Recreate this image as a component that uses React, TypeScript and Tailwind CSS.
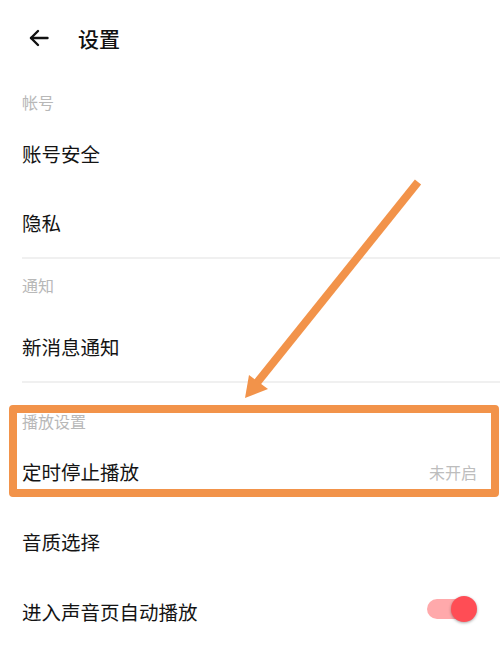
import React from 'react';

const font = { fontFamily: '"Noto Sans CJK SC", "Noto Sans", sans-serif' };

function SectionTitle({ label, pad }: { label: string; pad: string }) {
  return (
    <div className={`h-[54px] px-[22px] ${pad}`}>
      <span className="block text-[16px] leading-[22px] text-[#b8b8b8]">{label}</span>
    </div>
  );
}

function Row({
  label,
  height = 'h-[70px]',
  children,
}: {
  label: string;
  height?: string;
  children?: React.ReactNode;
}) {
  return (
    <div className={`${height} flex items-center justify-between pl-[22px] pr-[23px]`}>
      <span className="text-[19.5px] leading-[26px] text-[#141414]">{label}</span>
      {children}
    </div>
  );
}

function Divider() {
  return <div className="ml-[22px] h-[2px] bg-[#f0f0f0]" />;
}

export default function App() {
  return (
    <div className="relative h-[668px] w-full overflow-hidden bg-white" style={font}>
      <header className="flex h-[76px] items-center pl-[29px]">
        <svg width="20" height="18" viewBox="0 0 20 18" fill="none" stroke="#111" strokeWidth="2.4" strokeLinecap="round" strokeLinejoin="round">
          <path d="M18.5 9H2" />
          <path d="M9 2L2 9l7 7" />
        </svg>
        <h1 className="ml-[29px] text-[21px] font-medium leading-[28px] text-[#111]">设置</h1>
      </header>

      <div className="h-[43px] px-[22px] pt-[15px]">
        <span className="block text-[16px] leading-[22px] text-[#b8b8b8]">帐号</span>
      </div>
      <Row label="账号安全" />
      <Row label="隐私" height="h-[68px]" />
      <Divider />

      <SectionTitle label="通知" pad="pt-[15px]" />
      <Row label="新消息通知" height="h-[68px]" />
      <Divider />

      <SectionTitle label="播放设置" pad="pt-[27px]" />
      <Row label="定时停止播放">
        <span className="text-[16px] leading-[22px] text-[#bdbdbd]">未开启</span>
      </Row>
      <Row label="音质选择" />
      <Row label="进入声音页自动播放">
        <div className="relative mb-[6px] h-[26px] w-[50px]">
          <div className="absolute left-0 top-[3px] h-[20px] w-[44px] rounded-full bg-[#ffa9ab]" />
          <div className="absolute right-0 top-0 h-[26px] w-[26px] rounded-full bg-[#ff4d55] shadow-[0_1px_3px_rgba(0,0,0,0.35)]" />
        </div>
      </Row>

      {/* annotation overlay */}
      <div className="pointer-events-none absolute left-[9px] top-[405px] h-[92px] w-[490px] rounded-[4px] border-[8px] border-[#f2934a]" />
      <svg className="pointer-events-none absolute inset-0" width="500" height="668" viewBox="0 0 500 668">
        <line x1="418" y1="182" x2="256" y2="384" stroke="#f2934a" strokeWidth="8" />
        <polygon points="245,398 249,375 268,389" fill="#f2934a" />
      </svg>
    </div>
  );
}
